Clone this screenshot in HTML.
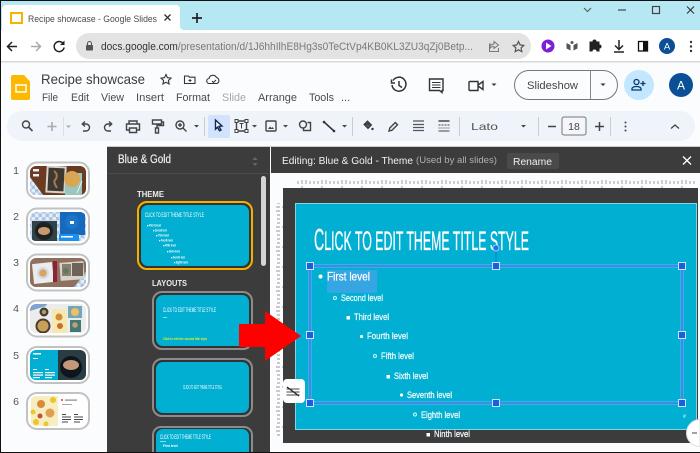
<!DOCTYPE html>
<html><head><meta charset="utf-8">
<style>
html,body{margin:0;padding:0;background:#fff;overflow:hidden}
body{width:700px;height:453px;overflow:hidden}
svg{display:block;font-family:"Liberation Sans",sans-serif;overflow:hidden}
.ic{fill:none;stroke:#444;stroke-width:1.4}
.m{font-size:11px;fill:#4a4a4a}
.s{font-size:9px;fill:#f2fbfd;stroke:#f2fbfd;stroke-width:.25}
.t{font-size:3.2px;font-weight:bold;fill:#fff}
.u{text-transform:uppercase;fill:#fff}
</style></head><body>
<svg width="700" height="453" viewBox="0 0 700 453" xmlns="http://www.w3.org/2000/svg">
<defs>
<pattern id="rt" x="285" y="0" width="20" height="8" patternUnits="userSpaceOnUse"><path d="M1 4v4M5 5v3M9 5v3M13 5v3M17 2v6" stroke="#777" stroke-width=".7" fill="none"/></pattern>
<pattern id="rl" x="0" y="190" width="8" height="20" patternUnits="userSpaceOnUse"><path d="M4 1h4M5 5h3M5 9h3M5 13h3M2 17h6" stroke="#777" stroke-width=".7" fill="none"/></pattern>
<pattern id="ck" width="7" height="7" patternUnits="userSpaceOnUse"><rect width="7" height="7" fill="#e4edf7"/><rect width="3.5" height="3.5" fill="#a9c4e4"/><rect x="3.5" y="3.5" width="3.5" height="3.5" fill="#a9c4e4"/></pattern>
<clipPath id="c1"><rect x="30" y="166" width="56" height="29" rx="6"/></clipPath>
<clipPath id="c2"><rect x="30" y="212" width="56" height="29" rx="6"/></clipPath>
<clipPath id="c3"><rect x="30" y="258" width="56" height="29" rx="6"/></clipPath>
<clipPath id="c4"><rect x="30" y="304" width="56" height="29" rx="6"/></clipPath>
<clipPath id="c5"><rect x="30" y="350" width="56" height="30" rx="6"/></clipPath>
<clipPath id="c6"><rect x="30" y="396" width="56" height="30" rx="6"/></clipPath>
<filter id="b" x="-5%" y="-5%" width="110%" height="110%"><feGaussianBlur stdDeviation=".35"/></filter>
</defs>

<!-- page base -->
<rect width="700" height="453" fill="#fbfcfe"/>

<!-- tab strip -->
<rect width="700" height="31" fill="#b5e8f3"/>
<path d="M0 30h2V9a4 4 0 0 1 4-4h170a4 4 0 0 1 4 4v17a4 4 0 0 0 4 4h516v3H0z" fill="#fff"/>
<rect x="11" y="13" width="11" height="10" fill="none" stroke="#f4b400" stroke-width="2"/>
<text x="28" y="22" font-size="9.600" fill="#4a4a4a" textLength="129" lengthAdjust="spacingAndGlyphs">Recipe showcase - Google Slides</text>
<path d="M164.500 14.500l6 6m0-6l-6 6" stroke="#333" stroke-width="1.300" fill="none"/>
<path d="M197 13v10M192 18h10" stroke="#222" stroke-width="1.700" fill="none"/>
<path d="M584 8l3.500 3.500L591 8" stroke="#555" fill="none"/>
<path d="M618 10h8" stroke="#444" stroke-width="1.200"/>
<rect x="652.500" y="6.500" width="7" height="7" fill="none" stroke="#444" stroke-width="1.200"/>
<path d="M687 6.500l7 7m0-7l-7 7" stroke="#333" stroke-width="1.100" fill="none"/>

<!-- nav -->
<rect y="31" width="700" height="30" fill="#fff"/>
<rect y="61" width="700" height="1.500" fill="#d9d9d9"/>
<path d="M17 46.500H8M12 42l-4.500 4.500L12 51" stroke="#222" stroke-width="1.500" fill="none"/>
<path d="M31 46.500h9M36 42l4.500 4.500L36 51" stroke="#aaa" stroke-width="1.500" fill="none"/>
<path d="M63.500 44a5 5 0 1 0 .6 3.500" stroke="#222" stroke-width="1.500" fill="none"/><path d="M64.500 40.500v4.500h-4.500z" fill="#222"/>
<rect x="76" y="33" width="455" height="26" rx="13" fill="#e3e3e3"/>
<rect x="86" y="45" width="7" height="5.500" rx=".8" fill="#555"/><path d="M87.500 45v-1.500a2 2 0 0 1 4 0V45" stroke="#555" fill="none"/>
<text x="101" y="50" font-size="10.800" textLength="372" lengthAdjust="spacingAndGlyphs"><tspan fill="#333">docs.google.com</tspan><tspan fill="#7a7a7a">/presentation/d/1J6hhIlhE8Hg3s0TeCtVp4KB0KL3ZU3qZj0Betp...</tspan></text>
<path d="M491 44h-1.500v7.500h9V48M494 41.500l4.500 3.500-4.500 3.500v-2c-2.500 0-4 1-4.500 3 0-3 1.500-5.500 4.500-5.500z" stroke="#777" fill="none"/>
<path d="M518.500 41.500l1.600 3.400 3.700.5-2.700 2.500.7 3.700-3.300-1.800-3.300 1.800.7-3.700-2.700-2.500 3.700-.5z" stroke="#555" stroke-width="1.200" fill="none"/>
<circle cx="548" cy="46" r="6.500" fill="#7b1fd8"/><path d="M546 42.500v7l5.500-3.500z" fill="#fff"/>
<path d="M566.500 43l4 2v5.500l-4-2zM577.500 43l-4 2v5.500l4-2z" fill="#555"/><circle cx="572" cy="42.500" r="1.500" fill="#555"/>
<path d="M590 43h3a2 2 0 0 1 4 0h3v3a2 2 0 0 1 0 4v3h-3a2 2 0 0 0-4 0h-3z" fill="#222" transform="translate(-.5 -1.500)"/>
<path d="M619 40v9M615 45.500l4 4 4-4M614 52h10" stroke="#222" stroke-width="1.500" fill="none"/>
<rect x="638.500" y="41.500" width="9" height="9.500" fill="none" stroke="#111" stroke-width="1.300"/><rect x="643" y="41.500" width="4.500" height="9.500" fill="#111"/>
<circle cx="667" cy="46" r="8" fill="#0b4f96"/><text x="667" y="49.500" font-size="9.500" fill="#fff" text-anchor="middle">A</text>
<g fill="#333"><circle cx="691" cy="42" r="1.200"/><circle cx="691" cy="46.500" r="1.200"/><circle cx="691" cy="51" r="1.200"/></g>

<!-- logo & title -->
<path d="M13 75h11l6 6.500V98a2 2 0 0 1-2 2H13a2 2 0 0 1-2-2V77a2 2 0 0 1 2-2z" fill="#fdb900"/>
<rect x="16" y="85" width="10" height="7" fill="none" stroke="#fff" stroke-width="1.500"/>
<text x="41" y="84" font-size="14" fill="#3c3c3c" textLength="104" lengthAdjust="spacingAndGlyphs">Recipe showcase</text>
<path d="M166 74.500l1.500 3.200 3.500.4-2.600 2.400.7 3.500-3.100-1.700-3.100 1.700.7-3.500-2.600-2.400 3.500-.4z" stroke="#333" stroke-width="1.100" fill="none"/>
<path d="M184.500 76h4l1 1.200h5.500v6.300h-10.500z" stroke="#333" stroke-width="1.100" fill="none"/><path d="M190 79v3M188.500 80.500h3" stroke="#333"/>
<path d="M209.500 83.500a2.500 2.500 0 0 1-.5-5 4 4 0 0 1 7.500-1 3.200 3.200 0 0 1 .5 6z" stroke="#333" stroke-width="1.100" fill="none"/><path d="M212 81l1.500 1.500 2.500-2.500" stroke="#333" fill="none"/>
<g class="m">
<text x="42" y="101" textLength="16" lengthAdjust="spacingAndGlyphs">File</text><text x="71" y="101" textLength="18" lengthAdjust="spacingAndGlyphs">Edit</text><text x="101" y="101" textLength="23" lengthAdjust="spacingAndGlyphs">View</text><text x="136" y="101" textLength="28" lengthAdjust="spacingAndGlyphs">Insert</text><text x="176" y="101" textLength="34" lengthAdjust="spacingAndGlyphs">Format</text><text x="222" y="101" style="fill:#a8a8a8" textLength="24" lengthAdjust="spacingAndGlyphs">Slide</text><text x="258" y="101" textLength="39" lengthAdjust="spacingAndGlyphs">Arrange</text><text x="309" y="101" textLength="25" lengthAdjust="spacingAndGlyphs">Tools</text><text x="341" y="101">...</text>
</g>

<!-- top right -->
<path d="M393 80.500a7 7 0 1 1-1 4.500M391.500 79.500v3.500h3.500M399 81v4.500l3 2" stroke="#333" stroke-width="1.500" fill="none"/>
<path d="M429.500 79h13.500v11.500h-1v2l-2.500-2h-10z" stroke="#333" stroke-width="1.400" fill="none"/><path d="M432 82.500h8.500M432 85h8.500M432 87.500h8.500" stroke="#333"/>
<path d="M470 81.500h8v9h-8a1 1 0 0 1-1-1v-7a1 1 0 0 1 1-1zM478 85l5-3.500v8l-5-3.500" stroke="#333" stroke-width="1.400" fill="none"/>
<path d="M491.500 83.500h5l-2.500 2.500z" fill="#333"/>
<rect x="514.500" y="70.500" width="103" height="29" rx="14.500" fill="#fbfcfe" stroke="#777"/>
<path d="M590.500 70.500v29" stroke="#888"/>
<text x="527" y="89" font-size="11" fill="#444" textLength="51" lengthAdjust="spacingAndGlyphs">Slideshow</text>
<path d="M600.500 83.500h5l-2.500 2.500z" fill="#333"/>
<circle cx="639" cy="85" r="15" fill="#c2e7ff"/>
<circle cx="636.500" cy="82" r="2.500" fill="none" stroke="#0b3a66" stroke-width="1.300"/><path d="M632 90v-1.200c0-1.600 2.500-2.300 4.500-2.300s4.500.7 4.500 2.300V90zM643 81v5M640.500 83.500h5" stroke="#0b3a66" stroke-width="1.300" fill="none"/>
<circle cx="681" cy="85" r="12" fill="#0b4f96"/><text x="681" y="89.500" font-size="12" fill="#fff" text-anchor="middle">A</text>

<!-- toolbar -->
<rect x="7" y="111" width="688" height="30" rx="15" fill="#eff3fa"/>
<circle cx="26" cy="124.500" r="3.500" class="ic"/><path d="M28.500 127l4 4" stroke="#444" stroke-width="1.600"/>
<path d="M52 122v9M47.500 126.500h9" stroke="#aaa" stroke-width="1.600"/>
<path d="M66 125.500h5l-2.500 2.500z" fill="#aaa"/><path d="M63.500 117v19" stroke="#dde"/>
<path d="M83 131h3a3.500 3.500 0 0 0 0-7h-3.500M85 121.500l-2.700 2.500 2.700 2.500" class="ic"/>
<path d="M113 131h-3a3.500 3.500 0 0 1 0-7h3.500M111 121.500l2.700 2.500-2.700 2.500" class="ic" transform="translate(-2 0)"/>
<path d="M129 124v-3h8v3M129 130h-2.500v-6h13v6H137M129.500 128h7v4.500h-7z" class="ic"/>
<path d="M152.500 120h9v4h-9zM161.500 122h2v3.500h-6.500v2.500M155.500 128h3v5h-3z" class="ic" stroke-width="1.300"/>
<circle cx="180" cy="125" r="4" class="ic"/><path d="M183 128l3.500 3.500M180 123v4M178 125h4" class="ic"/>
<path d="M194 125h5l-2.500 2.500z" fill="#444"/><path d="M204.500 117v19" stroke="#ccc"/>
<rect x="208" y="115" width="22" height="23" rx="2" fill="#d3e3fd"/>
<path d="M215.500 120l6.500 6-3 .4 2 3.600-1.500.8-2-3.600-2 2z" fill="#fff" stroke="#0b2a5c" stroke-width="1.400"/>
<path d="M236.500 121h10v10h-10z" class="ic"/><g fill="#fff" stroke="#444"><rect x="235" y="119.500" width="3" height="3"/><rect x="245" y="119.500" width="3" height="3"/><rect x="235" y="129.500" width="3" height="3"/><rect x="245" y="129.500" width="3" height="3"/></g><path d="M239.500 123.500h4M241.500 123.500v5" stroke="#444"/>
<path d="M252 125h5l-2.500 2.500z" fill="#444"/>
<rect x="266" y="121" width="10" height="10" rx="1" class="ic"/><path d="M268 129l2-2.500 1.500 1.500 1-1 1.500 2z" fill="#444"/>
<path d="M283 125h5l-2.500 2.500z" fill="#444"/>
<circle cx="303" cy="124.500" r="3.500" class="ic"/><path d="M307.500 122.500h3v8h-7v-3" class="ic"/>
<path d="M324 122l10 9" stroke="#333" stroke-width="1.600"/><circle cx="324" cy="122" r="1.300" fill="#333"/><circle cx="334" cy="131" r="1.300" fill="#333"/>
<path d="M342 125h5l-2.500 2.500z" fill="#444"/><path d="M352.500 117v19" stroke="#ccc"/>
<path d="M367.500 121l4 4-3.500 3.500-4-4zM364.500 124h6.500" stroke="#333" fill="#555"/><circle cx="372.500" cy="129" r="1.200" fill="#333"/>
<path d="M389 131l.8-3 5.500-5.500 2.200 2.200-5.500 5.500z" class="ic"/>
<path d="M413 121h11M413 124.500h11M413 127.500h11M413 130.500h11" stroke="#555" stroke-width="1.200"/>
<path d="M438.500 121h11" stroke="#444" stroke-width="1.500"/><path d="M438.500 125h2m1 0h2m1 0h2m1 0h2M438.500 128h1m1 0h1m1 0h1m1 0h1m1 0h1m1 0h1M438.500 131h11" stroke="#444" fill="none"/>
<path d="M459.500 117v19" stroke="#ccc"/>
<text x="471" y="130" font-size="10.500" fill="#555" textLength="27" lengthAdjust="spacingAndGlyphs">Lato</text>
<path d="M521 125h5l-2.500 2.500z" fill="#444"/><path d="M538.500 117v19" stroke="#ccc"/>
<path d="M548 126.500h8" stroke="#444" stroke-width="1.500"/>
<rect x="562" y="117" width="24" height="18" rx="2" fill="#f4f6fb" stroke="#777"/>
<text x="574" y="130" font-size="10.500" fill="#444" text-anchor="middle">18</text>
<path d="M599.500 122v9M595 126.500h9" stroke="#444" stroke-width="1.500"/>
<path d="M610.500 117v19" stroke="#ccc"/>
<g fill="#444"><circle cx="625.500" cy="122.500" r="1"/><circle cx="625.500" cy="126.500" r="1"/><circle cx="625.500" cy="130.500" r="1"/></g>
<path d="M671 128.500l4-3.500 4 3.500" stroke="#444" stroke-width="1.300" fill="none"/>

<!-- slide numbers -->
<g font-size="10.500" fill="#555" text-anchor="middle">
<text x="16" y="174">1</text><text x="16" y="220">2</text><text x="16" y="266">3</text><text x="16" y="312">4</text><text x="16" y="359">5</text><text x="16" y="405">6</text>
</g>

<!-- thumbnails -->
<g fill="#fff" stroke="#c2c2c2" stroke-width="2">
<rect x="27" y="162.500" width="62" height="36" rx="10"/>
<rect x="27" y="208.500" width="62" height="36" rx="10"/>
<rect x="27" y="254.500" width="62" height="36" rx="10"/>
<rect x="27" y="300.500" width="62" height="36" rx="10"/>
<rect x="27" y="347" width="62" height="36" rx="10"/>
<rect x="27" y="393" width="62" height="36" rx="10"/>
</g>
<g filter="url(#b)">
<g clip-path="url(#c1)">
<rect x="30" y="166" width="56" height="29" fill="#6a3b24"/>
<path d="M30 177l13 18H30z" fill="url(#ck)"/>
<rect x="46" y="166" width="20" height="27" fill="#d8d2c8" transform="rotate(3 56 180)"/><rect x="48" y="168" width="16" height="23" fill="#3e3730" transform="rotate(3 56 180)"/>
<path d="M54 171c4 3 3 7 1 9s1 6 2 8" stroke="#a8794a" stroke-width="2" fill="none"/>
<rect x="65" y="173" width="17" height="22" fill="#9ac6bf"/><circle cx="72" cy="179" r="8" fill="#dba653"/>
<rect x="33" y="169" width="6" height="2.500" fill="#eee"/><rect x="33" y="174" width="6" height="2.500" fill="#eee"/>
<path d="M77 193l5-12" stroke="#e8eee8"/>
</g>
<g clip-path="url(#c2)">
<rect x="30" y="212" width="56" height="29" fill="url(#ck)"/>
<rect x="60" y="211" width="25" height="24" fill="#1569bd"/><circle cx="72" cy="222" r="7" fill="#1c74c6"/><rect x="70" y="221" width="4" height="3" fill="#fff"/>
<rect x="32" y="221" width="25" height="20" fill="#33434a"/><circle cx="44" cy="231" r="9" fill="#1c2224"/><ellipse cx="44" cy="231" rx="6" ry="4" fill="#c99a72"/>
<rect x="59" y="234" width="20" height="8" fill="#1e90ef"/><rect x="61" y="236" width="12" height="1.500" fill="#fff"/>
</g>
<g clip-path="url(#c3)">
<rect x="30" y="258" width="56" height="29" fill="#8f6f5e"/>
<path d="M74 287l12-15v15z" fill="url(#ck)"/>
<rect x="33" y="263" width="20" height="20" fill="#ececec" transform="rotate(-6 43 273)"/><circle cx="43" cy="273" r="6" fill="#cfdcf0"/><circle cx="43" cy="273" r="3.800" fill="#dfa25a"/>
<rect x="53" y="261" width="4" height="21" fill="#8d2038"/>
<rect x="60" y="262" width="24" height="18" fill="#d8d2ca" transform="rotate(-4 72 271)"/><rect x="62" y="264" width="9" height="12" fill="#8a8070"/><rect x="72" y="263" width="11" height="13" fill="#6d6458"/>
<circle cx="66" cy="271" r="3" fill="#5f7a5c"/>
</g>
<g clip-path="url(#c4)">
<rect x="30" y="304" width="56" height="29" fill="#ececec"/>
<path d="M30 311l16-5 1-2H30z" fill="#7fa3cc"/>
<circle cx="44" cy="312" r="4.500" fill="#3a3f38"/><circle cx="44" cy="312" r="2.200" fill="#b99960"/>
<circle cx="43" cy="326" r="7.500" fill="#4b3b2c"/><circle cx="43" cy="326" r="5.500" fill="#c9a05a"/>
<rect x="52" y="309" width="15" height="24" fill="#f5e8b0"/><circle cx="59" cy="317" r="3.500" fill="#d48b32"/><circle cx="60" cy="326" r="3" fill="#c8702a"/>
<rect x="68" y="306" width="14" height="12" fill="#6fa7bd"/><circle cx="75" cy="312" r="4" fill="#f0c060"/>
<rect x="70" y="320" width="11" height="12" fill="#3f7a70"/><circle cx="75" cy="325" r="2.800" fill="#c99880"/>
</g>
<g clip-path="url(#c5)">
<rect x="30" y="350" width="28" height="30" fill="#00afd1"/><rect x="58" y="350" width="28" height="30" fill="#2c3c42"/>
<circle cx="71" cy="367" r="11" fill="#11181a"/><ellipse cx="71" cy="365" rx="8" ry="5" fill="#c29878"/>
<g fill="#fff"><rect x="33" y="353" width="8" height="1.500"/><rect x="33" y="358" width="5" height="1"/><rect x="33" y="369" width="4" height="1"/><rect x="33" y="372" width="10" height="1.200"/><rect x="33" y="374.500" width="10" height="1.200"/><rect x="33" y="377" width="7" height="1.200"/><rect x="45" y="369" width="4" height="1"/><rect x="45" y="372" width="10" height="1.200"/><rect x="45" y="374.500" width="10" height="1.200"/><rect x="45" y="377" width="7" height="1.200"/></g>
</g>
<g clip-path="url(#c6)">
<rect x="30" y="396" width="56" height="30" fill="#fff"/>
<rect x="31" y="396" width="27" height="30" fill="#f6edc0"/>
<circle cx="36" cy="422" r="3" fill="#efc52a"/><circle cx="46" cy="424" r="2.500" fill="#efc52a"/><circle cx="53" cy="400" r="3" fill="#efc52a"/><circle cx="33" cy="412" r="2.500" fill="#efc52a"/>
<circle cx="41" cy="404" r="4" fill="#d88a3a"/><circle cx="50" cy="413" r="4.500" fill="#e0a050"/><circle cx="40" cy="416" r="2.500" fill="#c0542a"/>
<circle cx="62" cy="400" r="1" fill="#e33"/><rect x="65" y="399.500" width="12" height="1.200" fill="#888"/><rect x="62" y="404" width="10" height="1" fill="#aaa"/>
<g fill="#444"><rect x="62" y="414" width="4" height="1"/><rect x="62" y="416.500" width="9" height="1"/><rect x="62" y="419" width="9" height="1"/><rect x="62" y="421.500" width="6" height="1"/><rect x="74" y="414" width="4" height="1"/><rect x="74" y="416.500" width="9" height="1"/><rect x="74" y="419" width="9" height="1"/><rect x="74" y="421.500" width="6" height="1"/></g>
</g>
</g>

<!-- theme panel -->
<rect x="107" y="147" width="163" height="306" fill="#3c3c3c"/>
<rect x="107" y="173" width="163" height="1" fill="#4a4a4a"/>
<text x="118" y="163" font-size="11.500" fill="#eee" stroke="#eee" stroke-width=".2" textLength="53" lengthAdjust="spacingAndGlyphs">Blue &amp; Gold</text>
<path d="M252.500 160l2.500-3 2.500 3zM252.500 163l2.500 3 2.500-3z" fill="#666"/>
<rect x="261" y="176" width="5" height="90" rx="2.500" fill="#d5d5d5"/>
<text x="137" y="197" font-size="8.500" font-weight="bold" fill="#eee" textLength="27" lengthAdjust="spacingAndGlyphs">THEME</text>
<text x="152" y="286" font-size="8.500" font-weight="bold" fill="#eee" textLength="35" lengthAdjust="spacingAndGlyphs">LAYOUTS</text>

<rect x="138" y="202" width="114" height="67" rx="9" fill="#333" stroke="#f4b000" stroke-width="2"/>
<rect x="141" y="205" width="108" height="61" rx="7" fill="#00afd1"/>
<text x="145" y="217" font-size="6.500" class="u" textLength="59" lengthAdjust="spacingAndGlyphs">Click to edit theme title style</text>
<g class="t">
<text x="149" y="226.500" textLength="12" lengthAdjust="spacingAndGlyphs">First level</text>
<text x="155" y="231.500" textLength="12" lengthAdjust="spacingAndGlyphs">Second level</text>
<text x="158" y="236.500" textLength="11" lengthAdjust="spacingAndGlyphs">Third level</text>
<text x="161" y="241.500" textLength="12" lengthAdjust="spacingAndGlyphs">Fourth level</text>
<text x="165" y="246.500" textLength="11" lengthAdjust="spacingAndGlyphs">Fifth level</text>
<text x="169" y="252.500" textLength="11" lengthAdjust="spacingAndGlyphs">Sixth level</text>
<text x="173" y="258.500" textLength="12" lengthAdjust="spacingAndGlyphs">Seventh level</text>
<text x="176" y="263.500" textLength="12" lengthAdjust="spacingAndGlyphs">Eighth level</text>
</g>
<g fill="#fff"><rect x="147" y="225" width="1.300" height="1.300"/><rect x="153" y="230" width="1.300" height="1.300"/><rect x="156" y="235" width="1.300" height="1.300"/><rect x="159" y="240" width="1.300" height="1.300"/><rect x="163" y="245" width="1.300" height="1.300"/><rect x="167" y="251" width="1.300" height="1.300"/><rect x="171" y="257" width="1.300" height="1.300"/><rect x="174" y="262" width="1.300" height="1.300"/></g>

<rect x="153" y="292" width="99" height="57" rx="9" fill="#333" stroke="#8c8c8c" stroke-width="2"/>
<rect x="156" y="295" width="93" height="51" rx="7" fill="#00afd1"/>
<text x="163" y="312" font-size="6" class="u" textLength="53" lengthAdjust="spacingAndGlyphs">Click to edit theme title style</text>
<rect x="163" y="317" width="4" height=".7" fill="#9fe"/>
<text x="163" y="340" font-size="3.500" font-weight="bold" fill="#e6f020" textLength="44" lengthAdjust="spacingAndGlyphs">Click to edit the second title style</text>

<rect x="153" y="359" width="99" height="57" rx="9" fill="#333" stroke="#8c8c8c" stroke-width="2"/>
<rect x="156" y="362" width="93" height="51" rx="7" fill="#00afd1"/>
<text x="183" y="389" font-size="5" class="u" textLength="39" lengthAdjust="spacingAndGlyphs">Click to edit theme title style</text>

<path d="M152 453v-18a9 9 0 0 1 9-9h83a9 9 0 0 1 9 9v18z" fill="#8c8c8c"/>
<path d="M154 453v-18a7 7 0 0 1 7-7h83a7 7 0 0 1 7 7v18z" fill="#333"/>
<path d="M156 453v-17a7 7 0 0 1 7-7h79a7 7 0 0 1 7 7v17z" fill="#00afd1"/>
<text x="160" y="439" font-size="6" class="u" textLength="51" lengthAdjust="spacingAndGlyphs">Click to edit theme title style</text>
<text x="163" y="447" class="t">First level</text>
<rect x="160" y="441" width="6" height=".6" fill="#dff"/>

<!-- editor -->
<rect x="270" y="147" width="1" height="306" fill="#fff"/>
<rect x="271" y="147" width="429" height="26" fill="#3c3c3c"/>
<rect x="107" y="146" width="593" height="1" fill="#ccc"/>
<text x="282" y="164" font-size="10.500" fill="#f2f2f2" textLength="131" lengthAdjust="spacingAndGlyphs">Editing: Blue &amp; Gold - Theme</text>
<text x="416" y="163" font-size="9.500" fill="#b0b0b0" textLength="81" lengthAdjust="spacingAndGlyphs">(Used by all slides)</text>
<rect x="507" y="153" width="52" height="16" rx="2" fill="#4a4a4a"/>
<text x="513" y="165" font-size="10" fill="#eee" textLength="39" lengthAdjust="spacingAndGlyphs">Rename</text>
<path d="M683 156.500l8 8m0-8l-8 8" stroke="#fff" stroke-width="1.300" fill="none"/>

<!-- rulers -->
<rect x="297" y="180" width="398" height="8" fill="url(#rt)"/>
<rect x="276" y="203" width="7" height="235" fill="url(#rl)"/>

<!-- slide -->
<rect x="283" y="188" width="415" height="255" fill="#3c3c3c"/>
<rect x="295.500" y="203.500" width="401" height="226" fill="#00afd1" stroke="#7fd7e8"/>
<text x="314" y="250" class="u" font-size="27" stroke="#fff" stroke-width=".35" textLength="215" lengthAdjust="spacingAndGlyphs"><tspan font-size="31">C</tspan>lick to edit theme title style</text>

<!-- content -->
<rect x="327" y="270" width="50" height="23" fill="#35a6e3"/>
<text x="327" y="280.500" font-size="12" fill="#fff" stroke="#fff" stroke-width=".25" textLength="43" lengthAdjust="spacingAndGlyphs">First level</text>
<circle cx="320.500" cy="276.500" r="2" fill="#fff"/>
<g class="s">
<text x="341" y="301" textLength="42" lengthAdjust="spacingAndGlyphs">Second level</text>
<text x="354" y="320" textLength="35" lengthAdjust="spacingAndGlyphs">Third level</text>
<text x="367" y="339" textLength="41" lengthAdjust="spacingAndGlyphs">Fourth level</text>
<text x="381" y="359" textLength="33" lengthAdjust="spacingAndGlyphs">Fifth level</text>
<text x="394" y="379" textLength="34" lengthAdjust="spacingAndGlyphs">Sixth level</text>
<text x="407" y="398" textLength="45" lengthAdjust="spacingAndGlyphs">Seventh level</text>
<text x="421" y="418" textLength="39" lengthAdjust="spacingAndGlyphs">Eighth level</text>
<text x="434" y="437" textLength="36" lengthAdjust="spacingAndGlyphs">Ninth level</text>
</g>
<circle cx="335" cy="298" r="1.500" fill="none" stroke="#d8f4fa"/>
<rect x="346.500" y="316" width="3.500" height="3.500" fill="#fff"/>
<circle cx="361.500" cy="336.500" r="1.600" fill="#fff"/>
<circle cx="375" cy="356" r="1.500" fill="none" stroke="#d8f4fa"/>
<rect x="386.500" y="375" width="3.500" height="3.500" fill="#fff"/>
<circle cx="401.500" cy="395" r="1.600" fill="#fff"/>
<circle cx="415" cy="414.500" r="1.500" fill="none" stroke="#d8f4fa"/>
<rect x="426.500" y="433" width="3.500" height="3.500" fill="#fff"/>
<text x="683" y="418" font-size="5" fill="#fff" font-style="italic">#</text>

<!-- selection -->
<rect x="310" y="266" width="372" height="137" fill="none" stroke="#6fb0ee" stroke-width="3"/>
<rect x="310" y="266" width="372" height="137" fill="none" stroke="#2f80ea" stroke-width="1.600"/>
<path d="M496 266v-18" stroke="#1a73e8"/>
<circle cx="496" cy="248" r="3" fill="#1a73e8" stroke="#9fc8f5"/>
<g fill="#1a5fe0" stroke="#cfe2fb">
<rect x="306.500" y="262.500" width="7" height="7"/><rect x="492.500" y="262.500" width="7" height="7"/><rect x="678.500" y="262.500" width="7" height="7"/>
<rect x="306.500" y="331.500" width="7" height="7"/><rect x="678.500" y="331.500" width="7" height="7"/>
<rect x="306.500" y="399.500" width="7" height="7"/><rect x="492.500" y="399.500" width="7" height="7"/><rect x="678.500" y="399.500" width="7" height="7"/>
</g>

<!-- red arrow -->
<path d="M239 324h26v-13l36 25-36 25v-14h-26z" fill="#fe0000"/>

<!-- floating buttons -->
<rect x="283" y="379" width="22" height="24" rx="4" fill="#fff"/>
<path d="M286.500 389h13M286.500 392h13M286.500 395h13" stroke="#444"/><path d="M287 387l12 9" stroke="#222" stroke-width="1.300"/>
<path d="M700 419.500a13.500 13.500 0 0 0 0 27z" fill="#fff" stroke="#ddd"/>
<path d="M692 433h5" stroke="#444"/>

<!-- window edge -->
<rect width="700" height="1" fill="#111"/>
<rect width="1" height="453" fill="#111"/>
<rect y="452" width="700" height="1" fill="#111"/>
</svg>
</body></html>
